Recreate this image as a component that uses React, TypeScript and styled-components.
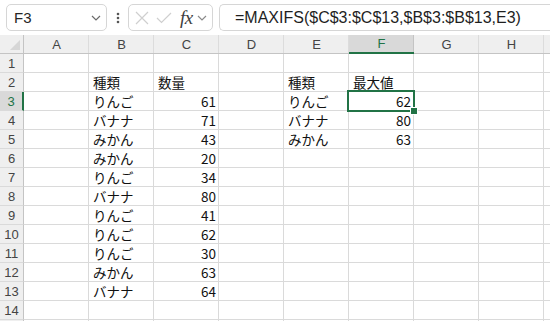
import React from 'react';
import styled, { createGlobalStyle } from 'styled-components';

const GlobalStyle = createGlobalStyle`
  html, body {
    margin: 0;
    padding: 0;
    background: #ffffff;
    overflow: hidden;
  }
  body {
    font-family: "Liberation Sans", "Noto Sans CJK JP", sans-serif;
  }
`;

const Page = styled.div`
  width: 550px;
  height: 321px;
  display: flex;
  flex-direction: column;
  overflow: hidden;
`;

const Toolbar = styled.div`
  height: 35px;
  flex: none;
  display: flex;
  align-items: flex-start;
  padding: 4px 0 0 6px;
  box-sizing: border-box;
  background: #ffffff;
`;

const NameBox = styled.div`
  width: 101px;
  height: 27px;
  box-sizing: border-box;
  border: 1px solid #d6d6d6;
  border-radius: 5px;
  display: flex;
  align-items: center;
  justify-content: space-between;
  padding: 0 5px 0 7px;
  font-size: 15px;
  color: #262626;
`;

const Dots = styled.div`
  width: 21px;
  height: 27px;
  display: flex;
  align-items: center;
  justify-content: center;
`;

const FxGroup = styled.div`
  width: 85px;
  height: 27px;
  box-sizing: border-box;
  border: 1px solid #d6d6d6;
  border-radius: 5px;
  display: flex;
  align-items: center;
  padding: 0 0 0 6px;
  gap: 7px;
`;

const FxText = styled.span`
  font-family: "Liberation Serif", "DejaVu Serif", serif;
  font-style: italic;
  font-size: 19px;
  line-height: 19px;
  color: #404040;
  margin-left: 1px;
  letter-spacing: -0.5px;
`;

const FxChevron = styled.span`
  display: flex;
  margin-left: -3px;
`;

const FormulaBox = styled.div`
  flex: 1;
  height: 27px;
  margin-left: 6px;
  box-sizing: border-box;
  border: 1px solid #d6d6d6;
  border-right: none;
  border-radius: 5px 0 0 5px;
  display: flex;
  align-items: center;
  padding-left: 15px;
  font-size: 16px;
  color: #1f1f1f;
  white-space: nowrap;
`;

const Grid = styled.div`
  flex: 1;
  display: grid;
  grid-template-columns: 24px repeat(8, 65px) 1fr;
  grid-auto-rows: 19px;
  background: #ffffff;
`;

const Corner = styled.div`
  position: relative;
  background: #efefef;
  border-right: 1px solid #c4c4c4;
  border-bottom: 1px solid #c4c4c4;
  box-sizing: border-box;
`;

const CornerTriangle = styled.div`
  position: absolute;
  right: 3px;
  bottom: 3px;
  width: 0;
  height: 0;
  border-left: 10px solid transparent;
  border-bottom: 10px solid #d6d6d6;
`;

const ColHead = styled.div<{ $selected?: boolean }>`
  background: ${(p) => (p.$selected ? '#d9d9d9' : '#efefef')};
  border-bottom: ${(p) => (p.$selected ? '2px solid #217346' : '1px solid #c4c4c4')};
  box-shadow: inset -1px 0 0 ${(p) => (p.$selected ? '#c4c4c4' : '#dcdcdc')};
  box-sizing: border-box;
  display: flex;
  align-items: flex-end;
  justify-content: center;
  padding-bottom: 1px;
  font-size: 13px;
  color: ${(p) => (p.$selected ? '#217346' : '#444444')};
`;

const RowHead = styled.div<{ $selected?: boolean }>`
  background: ${(p) => (p.$selected ? '#d9d9d9' : '#efefef')};
  border-right: ${(p) => (p.$selected ? '2px solid #217346' : '1px solid #c4c4c4')};
  border-bottom: 1px solid #dadada;
  box-sizing: border-box;
  display: flex;
  align-items: center;
  justify-content: center;
  font-size: 13px;
  color: ${(p) => (p.$selected ? '#217346' : '#444444')};
`;

const Cell = styled.div<{ $right?: boolean; $active?: boolean }>`
  position: relative;
  z-index: ${(p) => (p.$active ? 2 : 'auto')};
  border-right: 1px solid #dadada;
  border-bottom: 1px solid #dadada;
  box-sizing: border-box;
  display: flex;
  align-items: flex-end;
  justify-content: ${(p) => (p.$right ? 'flex-end' : 'flex-start')};
  padding: 0 2px 0 4px;
  font-family: "Noto Sans CJK JP", "Liberation Sans", sans-serif;
  font-size: 13.5px;
  line-height: 18px;
  color: #111111;
  white-space: nowrap;
`;

const ActiveFrame = styled.div`
  position: absolute;
  left: -2px;
  top: -2px;
  right: -2px;
  bottom: -2px;
  border: 2px solid #217346;
  pointer-events: none;
`;

const FillHandle = styled.div`
  position: absolute;
  right: -5px;
  bottom: -5px;
  width: 6px;
  height: 6px;
  background: #217346;
  border: 1px solid #ffffff;
`;

const ChevronDown = ({ color = '#555' }: { color?: string }) => (
  <svg width="10" height="6" viewBox="0 0 10 6">
    <path d="M1 1 L5 5 L9 1" fill="none" stroke={color} strokeWidth="1.2" />
  </svg>
);

const columns = ['A', 'B', 'C', 'D', 'E', 'F', 'G', 'H', ''];

type CellValue = string | number;

const tableRows: Record<number, Record<string, CellValue>> = {
  2: { B: '種類', C: '数量', E: '種類', F: '最大値' },
  3: { B: 'りんご', C: 61, E: 'りんご', F: 62 },
  4: { B: 'バナナ', C: 71, E: 'バナナ', F: 80 },
  5: { B: 'みかん', C: 43, E: 'みかん', F: 63 },
  6: { B: 'みかん', C: 20 },
  7: { B: 'りんご', C: 34 },
  8: { B: 'バナナ', C: 80 },
  9: { B: 'りんご', C: 41 },
  10: { B: 'りんご', C: 62 },
  11: { B: 'りんご', C: 30 },
  12: { B: 'みかん', C: 63 },
  13: { B: 'バナナ', C: 64 },
};

// row 15 only peeks in at the bottom edge, its label is out of view
const rowNumbers = Array.from({ length: 15 }, (_, i) => i + 1);

const App: React.FC = () => {
  return (
    <Page>
      <GlobalStyle />
      <Toolbar>
        <NameBox>
          <span>F3</span>
          <ChevronDown color="#6b6b6b" />
        </NameBox>
        <Dots>
          <svg width="4" height="12" viewBox="0 0 4 12">
            <circle cx="2" cy="2" r="1.3" fill="#555" />
            <circle cx="2" cy="6" r="1.3" fill="#555" />
            <circle cx="2" cy="10" r="1.3" fill="#555" />
          </svg>
        </Dots>
        <FxGroup>
          <svg width="14" height="14" viewBox="0 0 14 14">
            <path d="M1 1 L13 13 M13 1 L1 13" stroke="#cfcfcf" strokeWidth="1.2" fill="none" />
          </svg>
          <svg width="16" height="12" viewBox="0 0 16 12">
            <path d="M1 6 L5.5 10.5 L15 1" stroke="#cfcfcf" strokeWidth="1.2" fill="none" />
          </svg>
          <FxText>fx</FxText>
          <FxChevron>
            <ChevronDown color="#8a8a8a" />
          </FxChevron>
        </FxGroup>
        <FormulaBox>=MAXIFS($C$3:$C$13,$B$3:$B$13,E3)</FormulaBox>
      </Toolbar>
      <Grid>
        <Corner>
          <CornerTriangle />
        </Corner>
        {columns.map((c, i) => (
          <ColHead key={`h${i}`} $selected={c === 'F'}>
            {c}
          </ColHead>
        ))}
        {rowNumbers.map((r) => (
          <React.Fragment key={r}>
            <RowHead $selected={r === 3}>{r < 15 ? r : ''}</RowHead>
            {columns.map((c, i) => {
              const v = tableRows[r]?.[c];
              const active = r === 3 && c === 'F';
              return (
                <Cell key={`${r}-${i}`} $right={typeof v === 'number'} $active={active}>
                  {v}
                  {active && (
                    <ActiveFrame>
                      <FillHandle />
                    </ActiveFrame>
                  )}
                </Cell>
              );
            })}
          </React.Fragment>
        ))}
      </Grid>
    </Page>
  );
};

export default App;
